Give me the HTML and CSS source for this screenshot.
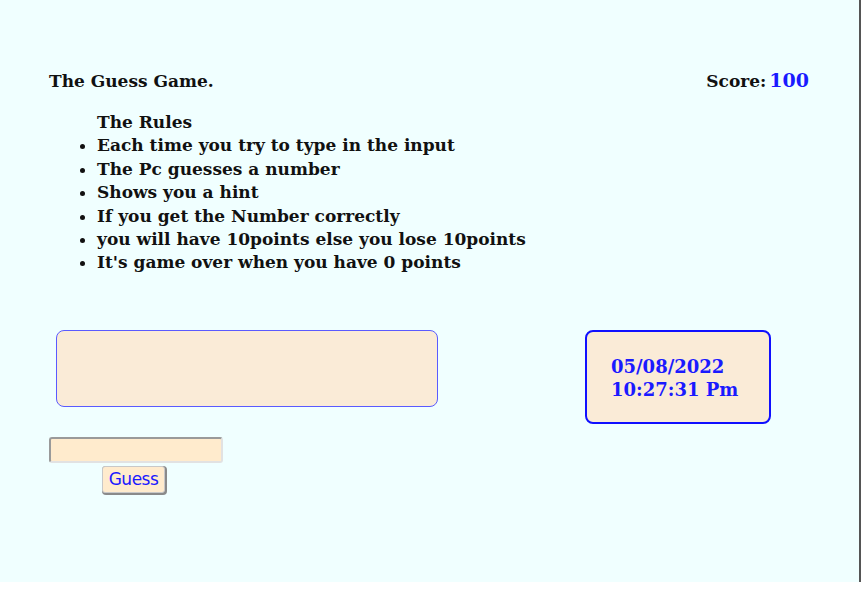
FILE: index.html
```html
<!DOCTYPE html>
<html>
<head>
<meta charset="utf-8">
<link rel="stylesheet" href="styles.css">
</head>
<body>
<div class="app">
  <header class="top">
    <h1 class="title">The Guess Game.</h1>
    <div class="score">Score:<span class="score-num">100</span></div>
  </header>
  <div class="rules">
    <div class="rules-head">The Rules</div>
    <ul class="rules-list">
      <li>Each time you try to type in the input</li>
      <li>The Pc guesses a number</li>
      <li>Shows you a hint</li>
      <li>If you get the Number correctly</li>
      <li>you will have 10points else you lose 10points</li>
      <li>It's game over when you have 0 points</li>
    </ul>
  </div>
  <div class="middle">
    <div class="left-col">
      <div class="hint"></div>
      <div class="form">
        <input class="guess-input" type="text">
        <button class="guess-btn">Guess</button>
      </div>
    </div>
    <div class="clock">
      <div>05/08/2022</div>
      <div>10:27:31 Pm</div>
    </div>
  </div>
</div>
</body>
</html>
```
FILE: styles.css
```css
html, body {
  margin: 0;
  padding: 0;
  background: #ffffff;
}
.app {
  width: 861px;
  height: 582px;
  box-sizing: border-box;
  background: #f0ffff;
  border-right: 2px solid #555;
  padding: 69px 50px 0 49px;
  font-family: "DejaVu Serif", Georgia, serif;
  font-weight: bold;
  color: #111;
}
.top {
  display: flex;
  justify-content: space-between;
  align-items: baseline;
}
.title {
  margin: 0;
  font-size: 17px;
  font-weight: bold;
}
.score {
  font-size: 17px;
}
.score-num {
  color: #1a1aff;
  font-size: 19px;
  margin-left: 3px;
}
.rules {
  margin-top: 20px;
  padding-left: 48px;
  font-size: 17px;
  line-height: 23.4px;
}
.rules-list {
  margin: 0;
  padding: 0;
  list-style: disc;
}
.middle {
  display: flex;
  justify-content: space-between;
  align-items: flex-start;
  margin-top: 55px;
}
.left-col {
  display: flex;
  flex-direction: column;
}
.hint {
  margin-left: 7px;
  width: 382px;
  height: 77px;
  box-sizing: border-box;
  background: #faebd7;
  border: 1.5px solid #5a5aff;
  border-radius: 8px;
}
.clock {
  width: 186px;
  height: 94px;
  margin-right: 38px;
  box-sizing: border-box;
  background: #faebd7;
  border: 2px solid #1010ff;
  border-radius: 8px;
  color: #1a1aff;
  font-size: 18px;
  line-height: 23px;
  padding: 23px 0 0 24px;
}
.form {
  display: flex;
  flex-direction: column;
  align-items: flex-start;
  margin-top: 30px;
}
.guess-input {
  width: 174px;
  height: 26px;
  box-sizing: border-box;
  background: #ffebcd;
  border-style: solid;
  border-width: 2px;
  border-color: #9a9a9a #e2e2e2 #e2e2e2 #9a9a9a;
  border-radius: 3px;
  margin: 0;
}
.guess-btn {
  margin: 3px 0 0 53px;
  width: 63px;
  height: 27px;
  padding: 0;
  background: #ffebcd;
  color: #1a1aff;
  font-family: "DejaVu Sans", Tahoma, sans-serif;
  font-size: 17px;
  border: 1px solid #c8c8c8;
  border-radius: 3px;
  box-shadow: 1px 1px 0 1px #8a8a8a;
  letter-spacing: -0.5px;
}
```
